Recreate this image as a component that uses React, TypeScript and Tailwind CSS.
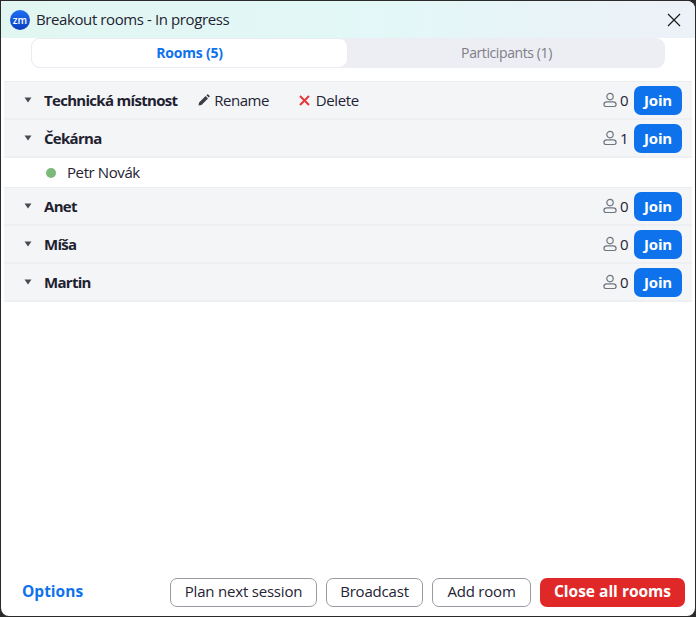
import { FC } from "react";

const font = { fontFamily: '"Open Sans", "Noto Sans", sans-serif' };

const PersonIcon: FC = () => (
  <svg width="16" height="16" viewBox="0 0 16 16" fill="none" stroke="#6e7680" strokeWidth="1.2">
    <circle cx="8" cy="4.6" r="3.2" />
    <path d="M1.9 12.6c0-1.7 1.5-2.7 3-2.7h6.2c1.5 0 3 1 3 2.7 0 1.2-.9 1.9-2 1.9H3.9c-1.1 0-2-.7-2-1.9z" />
  </svg>
);

const Caret: FC = () => (
  <svg width="8" height="6" viewBox="0 0 8 6" className="ml-[20px] mr-[12px] shrink-0">
    <path d="M0.5 0.5h7L4 5.5z" fill="#4a4a52" />
  </svg>
);

interface RoomRowProps {
  name: string;
  count: number;
  actions?: boolean;
}

const RoomRow: FC<RoomRowProps> = ({ name, count, actions }) => (
  <div className="flex h-[38px] items-center border-b-2 border-[#eeeff2] bg-[#f4f5f7] pr-[10px]">
    <Caret />
    <span className="text-[15px] font-bold tracking-[-0.7px] text-[#1f2130]">{name}</span>
    {actions && (
      <div className="flex items-center">
        <span className="ml-[21px] flex items-center gap-[4px] text-[15px] tracking-[-0.5px] text-[#232333]">
          <svg width="12" height="12" viewBox="0 0 12 12">
            <path d="M0.5 11.5l.6-3L7.6 2l2.4 2.4-6.5 6.5zM8.4 1.2l.8-.7c.3-.3.7-.3 1 0l1.3 1.3c.3.3.3.7 0 1l-.7.8z" fill="#3d3d45" />
          </svg>
          Rename
        </span>
        <span className="ml-[30px] flex items-center gap-[6px] text-[15px] tracking-[-0.4px] text-[#232333]">
          <svg width="11" height="11" viewBox="0 0 11 11" stroke="#e5383b" strokeWidth="2">
            <path d="M1 1l9 9M10 1l-9 9" />
          </svg>
          Delete
        </span>
      </div>
    )}
    <div className="ml-auto flex items-center">
      <PersonIcon />
      <span className="ml-[2px] w-[9px] text-[15px] text-[#232333]">{count}</span>
      <button className="ml-[5px] h-[29px] w-[48px] rounded-[7px] bg-[#0e72ed] text-[15px] font-bold tracking-[-0.2px] text-white">
        Join
      </button>
    </div>
  </div>
);

const FooterButton: FC<{ label: string; width: string }> = ({ label, width }) => (
  <button className={`h-[29px] rounded-[7px] border border-[#9a9aa2] bg-white pb-[2px] text-[15px] tracking-[-0.2px] text-[#232333] ${width}`}>
    {label}
  </button>
);

export default function App() {
  return (
    <div className="h-[617px] w-[696px] overflow-hidden bg-[#2a2a2a]" style={font}>
      <div className="mt-px ml-px flex h-[615px] w-[694px] flex-col overflow-hidden rounded-tr-[8px] rounded-bl-[8px] rounded-br-[8px] bg-white">
        <div className="flex h-[37px] shrink-0 items-center bg-gradient-to-r from-[#e2f6f1] via-[#e2f8f7] to-[#edf1f8] pl-[9px] pr-[14px]">
          <div className="flex h-[20px] w-[20px] items-center justify-center rounded-full bg-gradient-to-b from-[#1f6ff2] to-[#0b3fbf]">
            <span className="text-[10px] font-semibold leading-none text-white">zm</span>
          </div>
          <span className="ml-[6px] text-[15px] tracking-[-0.4px] text-[#232333]">Breakout rooms - In progress</span>
          <svg width="14" height="14" viewBox="0 0 14 14" stroke="#1a1a1a" strokeWidth="1.2" className="ml-auto">
            <path d="M1 1l12 12M13 1L1 13" />
          </svg>
        </div>
        <div className="mx-[30px] flex h-[30px] shrink-0 rounded-[9px] bg-[#edeef3]">
          <div className="flex w-[317px] items-center justify-center rounded-[9px] border border-[#e9ecf3] bg-white pb-px text-[14px] font-bold tracking-[-0.2px] text-[#0e72ed]">
            Rooms (5)
          </div>
          <div className="flex flex-1 items-center justify-center pb-px text-[14px] tracking-[-0.4px] text-[#7d7d88]">
            Participants (1)
          </div>
        </div>
        <div className="mx-[3px] mt-[13px] flex flex-1 flex-col border-t border-[#ebecf0]">
          <RoomRow name="Technická místnost" count={0} actions />
          <RoomRow name="Čekárna" count={1} />
          <div className="flex h-[30px] items-center border-b border-[#ebecf0] bg-white pl-[42px]">
            <span className="h-[10px] w-[10px] rounded-full bg-[#7cb97a]" />
            <span className="ml-[11px] text-[15px] tracking-[-0.4px] text-[#232333]">Petr Novák</span>
          </div>
          <RoomRow name="Anet" count={0} />
          <RoomRow name="Míša" count={0} />
          <RoomRow name="Martin" count={0} />
        </div>
        <div className="mb-[9px] flex h-[29px] shrink-0 items-center pl-[21px] pr-[10px]">
          <span className="pb-[2px] text-[15.5px] font-bold text-[#0e72ed]">Options</span>
          <div className="ml-auto flex items-center gap-[9px]">
            <FooterButton label="Plan next session" width="w-[147px]" />
            <FooterButton label="Broadcast" width="w-[97px]" />
            <FooterButton label="Add room" width="w-[99px]" />
            <button className="h-[29px] w-[145px] rounded-[7px] bg-[#e02828] pb-[2px] text-[15.5px] font-bold text-white">
              Close all rooms
            </button>
          </div>
        </div>
      </div>
    </div>
  );
}
